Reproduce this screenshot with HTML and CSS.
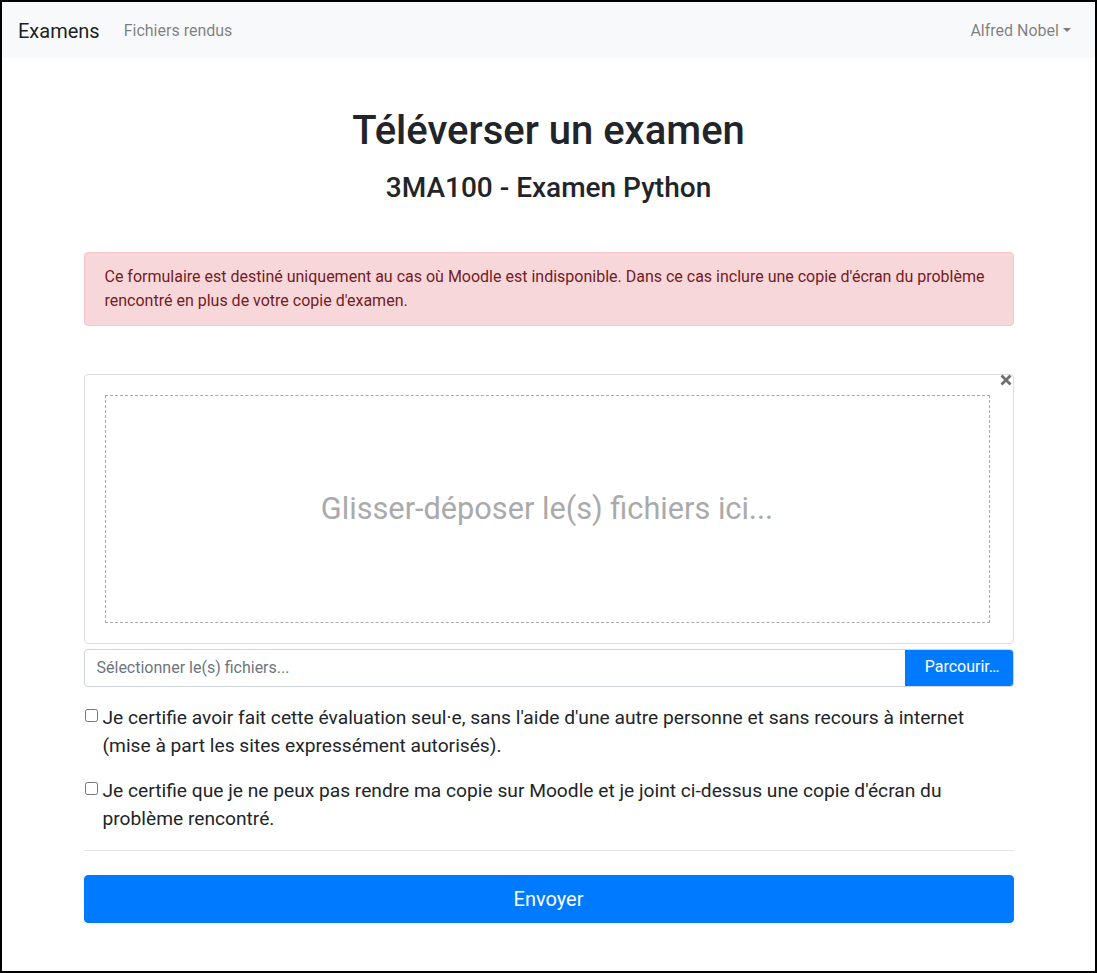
FILE: index.html
```html
<!DOCTYPE html>
<html lang="fr">
<head>
<meta charset="utf-8">
<title>Téléverser un examen</title>
<link rel="stylesheet" href="styles.css">
</head>
<body>
<div class="frame">
  <nav class="navbar">
    <a class="brand" href="#">Examens</a>
    <a class="nav-link" href="#">Fichiers rendus</a>
    <span class="spacer"></span>
    <a class="nav-link dropdown-toggle" href="#">Alfred Nobel</a>
  </nav>
  <main class="container">
    <h1 class="title">Téléverser un examen</h1>
    <h3 class="subtitle">3MA100 - Examen Python</h3>
    <div class="alert">Ce formulaire est destiné uniquement au cas où Moodle est indisponible. Dans ce cas inclure une copie d'écran du problème rencontré en plus de votre copie d'examen.</div>
    <div class="dropzone">
      <span class="remove"><svg width="12" height="12" viewBox="0 0 12 12"><path d="M1.5 1.5 L10.5 10.5 M10.5 1.5 L1.5 10.5" stroke="#6f6f6f" stroke-width="2.8" stroke-linecap="butt"/></svg></span>
      <div class="drop-area">Glisser-déposer le(s) fichiers ici...</div>
    </div>
    <div class="file-input">
      <span class="file-label">Sélectionner le(s) fichiers...</span>
      <span class="file-btn">Parcourir…</span>
    </div>
    <label class="check">
      <input type="checkbox">
      <span>Je certifie avoir fait cette évaluation seul·e, sans l'aide d'une autre personne et sans recours à internet (mise à part les sites expressément autorisés).</span>
    </label>
    <label class="check">
      <input type="checkbox">
      <span>Je certifie que je ne peux pas rendre ma copie sur Moodle et je joint ci-dessus une copie d'écran du problème rencontré.</span>
    </label>
    <hr class="sep">
    <button class="submit" type="button">Envoyer</button>
  </main>
</div>
</body>
</html>
```

FILE: styles.css
```css
* { box-sizing: border-box; }
html, body { margin: 0; padding: 0; }
body {
  font-family: Roboto, "Liberation Sans", sans-serif;
  font-size: 16px;
  line-height: 1.5;
  color: #212529;
  background: #fff;
}
.frame {
  width: 1097px;
  height: 973px;
  border: 2px solid #000;
  overflow: hidden;
}
.navbar {
  display: flex;
  align-items: center;
  background: #f8f9fa;
  padding: 9px 16px 7px;
  height: 56px;
}
.brand {
  font-size: 20px;
  line-height: 30px;
  padding: 5px 0;
  margin-right: 16px;
  color: rgba(0,0,0,.9);
  text-decoration: none;
}
.nav-link {
  padding: 8px;
  color: rgba(0,0,0,.5);
  text-decoration: none;
  line-height: 24px;
}
.spacer { flex: 1; }
.dropdown-toggle::after {
  content: "";
  display: inline-block;
  margin-left: .255em;
  vertical-align: .255em;
  border-top: .3em solid;
  border-right: .3em solid transparent;
  border-left: .3em solid transparent;
}
.container {
  width: 960px;
  margin: 0 auto;
  padding: 49px 15px 0;
}
.title {
  margin: 0 0 16px;
  font-size: 40px;
  font-weight: 500;
  line-height: 1.2;
  text-align: center;
}
.subtitle {
  margin: 0 0 47px;
  font-size: 28px;
  font-weight: 500;
  line-height: 1.2;
  text-align: center;
}
.alert {
  background: #f8d7da;
  border: 1px solid #f5c6cb;
  color: #721c24;
  border-radius: 4px;
  padding: 12px 20px;
  font-size: 16px;
  line-height: 24px;
  margin-bottom: 48px;
}
.dropzone {
  position: relative;
  border: 1px solid #ddd;
  border-radius: 4px;
  padding: 20px 23px 20px 20px;
}
.remove {
  position: absolute;
  top: -1px;
  right: 1px;
  width: 12px;
  height: 12px;
  display: block;
}
.remove svg { display: block; }
.drop-area {
  height: 228px;
  border: 1px dashed #aaa;
  display: flex;
  align-items: center;
  justify-content: center;
  font-size: 30.7px;
  color: #aaa;
}
.file-input {
  display: flex;
  margin-top: 5px;
  height: 38px;
  border: 1px solid #ced4da;
  border-radius: 4px;
  overflow: hidden;
}
.file-label {
  flex: 1;
  padding: 6px 12px;
  color: #6c757d;
  line-height: 24px;
}
.file-btn {
  background: #007bff;
  color: #fff;
  padding: 6px 14px 6px 20px;
  line-height: 24px;
  margin: -1px -1px -1px 0;
}
.check {
  display: flex;
  align-items: flex-start;
  font-size: 19.2px;
  line-height: 28px;
  margin-top: 17px;
}
.check + .check { margin-top: 17px; }
.check input {
  width: 13px;
  height: 13px;
  margin: 5px 5px 0 1px;
  flex: none;
}
.sep {
  border: 0;
  border-top: 1px solid #e5e5e5;
  margin: 17px 0 24px;
}
.submit {
  display: block;
  width: 100%;
  height: 48px;
  background: #007bff;
  color: #fff;
  border: 1px solid #007bff;
  border-radius: 4px;
  font-family: inherit;
  font-size: 20px;
  line-height: 30px;
  padding: 8px 16px;
}
```
